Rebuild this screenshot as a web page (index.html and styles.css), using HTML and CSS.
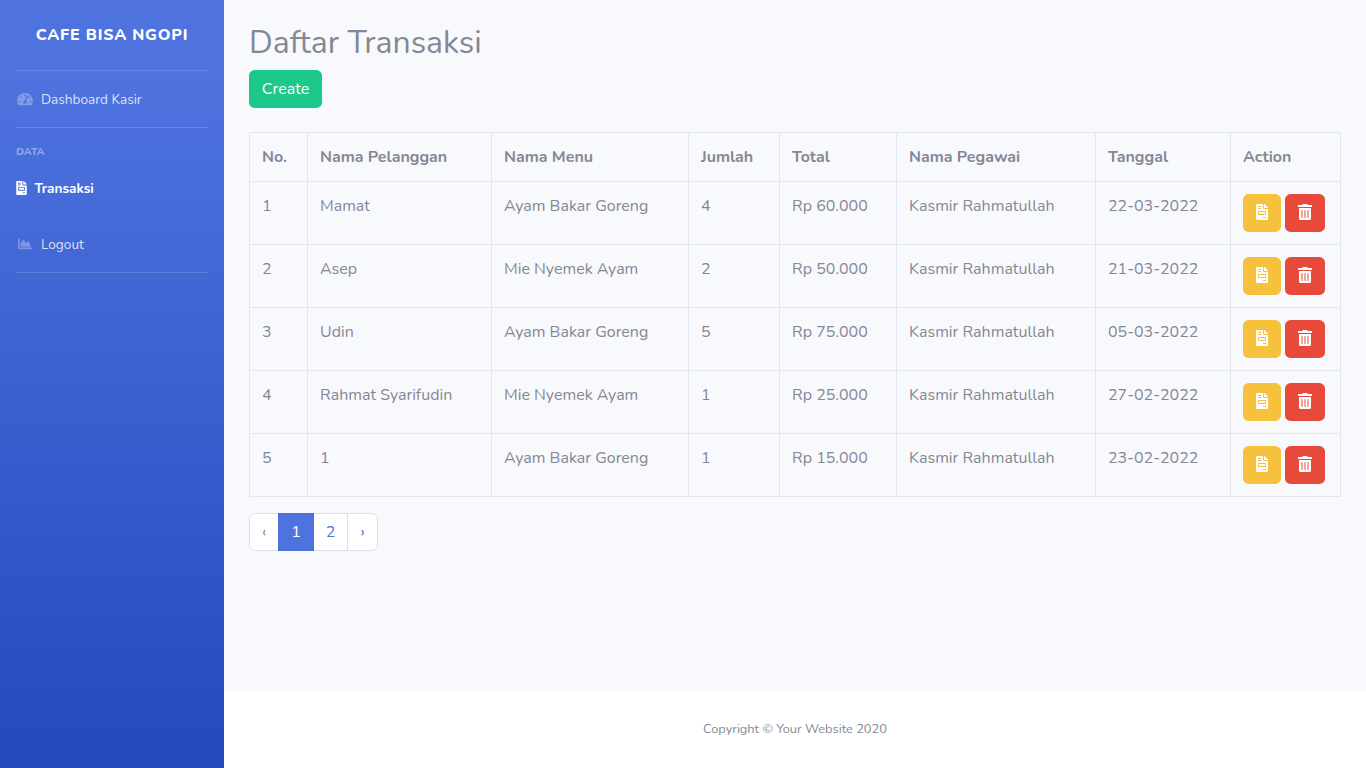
FILE: index.html
```html
<!DOCTYPE html>
<html lang="id">
<head>
<meta charset="utf-8">
<title>Daftar Transaksi</title>
<link rel="stylesheet" href="styles.css">
</head>
<body>
<svg class="sprite" aria-hidden="true">
  <symbol id="invoice" viewBox="0 0 384 512"><path d="M288 256H96v64h192v-64zm89-151L279.1 7c-4.5-4.5-10.6-7-17-7H256v128h128v-6.1c0-6.3-2.5-12.4-7-16.9zm-153 31V0H24C10.7 0 0 10.7 0 24v464c0 13.3 10.7 24 24 24h336c13.3 0 24-10.7 24-24V160H248c-13.2 0-24-10.8-24-24zM64 72c0-4.42 3.58-8 8-8h80c4.42 0 8 3.58 8 8v16c0 4.42-3.58 8-8 8H72c-4.42 0-8-3.58-8-8V72zm0 64c0-4.42 3.58-8 8-8h80c4.42 0 8 3.58 8 8v16c0 4.42-3.58 8-8 8H72c-4.42 0-8-3.58-8-8v-16zm256 304c0 4.42-3.58 8-8 8h-80c-4.42 0-8-3.58-8-8v-16c0-4.42 3.58-8 8-8h80c4.42 0 8 3.58 8 8v16zm0-200v96c0 8.84-7.16 16-16 16H80c-8.84 0-16-7.16-16-16v-96c0-8.84 7.16-16 16-16h224c8.84 0 16 7.16 16 16z"/></symbol>
  <symbol id="trash" viewBox="0 0 448 512"><path d="M32 464a48 48 0 0 0 48 48h288a48 48 0 0 0 48-48V128H32zm272-256a16 16 0 0 1 32 0v224a16 16 0 0 1-32 0zm-96 0a16 16 0 0 1 32 0v224a16 16 0 0 1-32 0zm-96 0a16 16 0 0 1 32 0v224a16 16 0 0 1-32 0zM432 32H312l-9.4-18.7A24 24 0 0 0 281.1 0H166.8a23.72 23.72 0 0 0-21.4 13.3L136 32H16A16 16 0 0 0 0 48v32a16 16 0 0 0 16 16h416a16 16 0 0 0 16-16V48a16 16 0 0 0-16-16z"/></symbol>
  <symbol id="chart" viewBox="0 0 512 512"><path d="M500 384c6.6 0 12 5.4 12 12v40c0 6.6-5.4 12-12 12H12c-6.6 0-12-5.4-12-12V76c0-6.6 5.4-12 12-12h40c6.6 0 12 5.4 12 12v308h436zM372.7 159.5L288 216l-85.3-113.7c-5.1-6.8-15.5-6.3-19.9 1L96 248v104h384l-89.9-187.8c-3.2-6.5-11.4-8.7-17.4-4.7z"/></symbol>
  <symbol id="gauge" viewBox="0 0 576 512"><path d="M288 32C128.94 32 0 160.94 0 320c0 52.8 14.25 102.26 39.06 144.8 5.61 9.62 16.3 15.2 27.44 15.2h443c11.14 0 21.83-5.58 27.44-15.2C561.75 422.26 576 372.8 576 320c0-159.06-128.94-288-288-288zm0 64c14.71 0 26.58 10.13 30.32 23.65-1.11 2.26-2.64 4.23-3.45 6.67l-9.22 27.67c-5.13 3.49-10.97 6.01-17.64 6.01-17.67 0-32-14.33-32-32S270.33 96 288 96zM96 384c-17.67 0-32-14.33-32-32s14.33-32 32-32 32 14.33 32 32-14.33 32-32 32zm48-160c-17.67 0-32-14.33-32-32s14.33-32 32-32 32 14.33 32 32-14.33 32-32 32zm246.77-72.41l-61.33 184C343.13 347.33 352 364.54 352 384c0 11.72-3.38 22.55-8.88 32H232.88c-5.5-9.45-8.88-20.28-8.88-32 0-33.94 26.5-61.43 59.9-63.59l61.34-184.01c4.17-12.56 17.73-19.45 30.36-15.17 12.57 4.19 19.35 17.79 15.17 30.36zm14.66 57.2l15.52-46.55c3.47-1.29 7.13-2.23 11.05-2.23 17.67 0 32 14.33 32 32s-14.33 32-32 32c-11.38-.01-20.89-6.28-26.57-15.22zM480 384c-17.67 0-32-14.33-32-32s14.33-32 32-32 32 14.33 32 32-14.33 32-32 32z"/></symbol>
</svg>
<div class="wrapper">
  <nav class="sidebar">
    <a class="brand"><span>CAFE BISA NGOPI</span></a>
    <hr class="divider">
    <a class="nav-link dash"><svg class="nav-icon gauge"><use href="#gauge"/></svg><span>Dashboard Kasir</span></a>
    <hr class="divider">
    <div class="heading"><span>DATA</span></div>
    <a class="nav-link active"><svg class="nav-icon invoice"><use href="#invoice"/></svg><span>Transaksi</span></a>
    <a class="nav-link logout"><svg class="nav-icon chart"><use href="#chart"/></svg><span>Logout</span></a>
    <hr class="divider">
  </nav>
  <div class="content">
    <main class="main">
      <h2 class="title">Daftar Transaksi</h2>
      <a class="btn create">Create</a>
      <table class="table">
        <colgroup><col class="c-no"><col class="c-customer"><col class="c-menu"><col class="c-qty"><col class="c-total"><col class="c-staff"><col class="c-date"><col class="c-action"></colgroup>
        <thead><tr><th>No.</th><th>Nama Pelanggan</th><th>Nama Menu</th><th>Jumlah</th><th>Total</th><th>Nama Pegawai</th><th>Tanggal</th><th>Action</th></tr></thead>
        <tbody>
          <tr><td>1</td><td>Mamat</td><td>Ayam Bakar Goreng</td><td>4</td><td>Rp 60.000</td><td>Kasmir Rahmatullah</td><td>22-03-2022</td><td><div class="actions"><a class="btn edit"><svg class="i-invoice"><use href="#invoice"/></svg></a><a class="btn delete"><svg class="i-trash"><use href="#trash"/></svg></a></div></td></tr>
          <tr><td>2</td><td>Asep</td><td>Mie Nyemek Ayam</td><td>2</td><td>Rp 50.000</td><td>Kasmir Rahmatullah</td><td>21-03-2022</td><td><div class="actions"><a class="btn edit"><svg class="i-invoice"><use href="#invoice"/></svg></a><a class="btn delete"><svg class="i-trash"><use href="#trash"/></svg></a></div></td></tr>
          <tr><td>3</td><td>Udin</td><td>Ayam Bakar Goreng</td><td>5</td><td>Rp 75.000</td><td>Kasmir Rahmatullah</td><td>05-03-2022</td><td><div class="actions"><a class="btn edit"><svg class="i-invoice"><use href="#invoice"/></svg></a><a class="btn delete"><svg class="i-trash"><use href="#trash"/></svg></a></div></td></tr>
          <tr><td>4</td><td>Rahmat Syarifudin</td><td>Mie Nyemek Ayam</td><td>1</td><td>Rp 25.000</td><td>Kasmir Rahmatullah</td><td>27-02-2022</td><td><div class="actions"><a class="btn edit"><svg class="i-invoice"><use href="#invoice"/></svg></a><a class="btn delete"><svg class="i-trash"><use href="#trash"/></svg></a></div></td></tr>
          <tr><td>5</td><td>1</td><td>Ayam Bakar Goreng</td><td>1</td><td>Rp 15.000</td><td>Kasmir Rahmatullah</td><td>23-02-2022</td><td><div class="actions"><a class="btn edit"><svg class="i-invoice"><use href="#invoice"/></svg></a><a class="btn delete"><svg class="i-trash"><use href="#trash"/></svg></a></div></td></tr>
        </tbody>
      </table>
      <div class="pagination"><span class="page prev">‹</span><span class="page current">1</span><a class="page second">2</a><a class="page next">›</a></div>
    </main>
    <footer class="footer"><span>Copyright © Your Website 2020</span></footer>
  </div>
</div>
</body>
</html>
```
FILE: styles.css
```css
* { box-sizing: border-box; }
body { margin: 0; font-family: Nunito, Lato, "Open Sans", sans-serif; font-size: 16px; line-height: 24px; color: #858796; background: #f8f9fc; }
.sprite { display: none; }
svg { display: block; fill: currentColor; flex: none; }
.wrapper { display: flex; height: 768px; }

.sidebar { width: 224px; flex: none; color: #fff; background: linear-gradient(180deg, #4e73df 10%, #224abe 100%); }
.brand { display: flex; align-items: center; justify-content: center; height: 70px; font-weight: 800; letter-spacing: .8px; }
.divider { height: 1px; margin: 0 16px; border: 0; background: rgba(255, 255, 255, .15); }
.nav-link { display: flex; align-items: center; padding: 2px 16px 0; font-size: 13.6px; line-height: 20px; color: rgba(255, 255, 255, .8); }
.dash { height: 56px; }
.nav-icon { height: 14px; margin-bottom: 2px; color: rgba(255, 255, 255, .3); }
.gauge { width: 16px; margin-right: 8.5px; margin-left: .5px; }
.chart { width: 14px; margin-right: 9.5px; margin-left: 1.5px; }
.invoice { width: 11px; margin-right: 7.4px; color: #fff; }
.heading { padding: 16px 16px 0; height: 32px; font-size: 10.4px; line-height: 16px; font-weight: 800; color: rgba(255, 255, 255, .4); }
.active { height: 56px; color: #fff; font-weight: 700; }
.logout { height: 56px; }

.content { flex: 1; display: flex; flex-direction: column; }
.main { flex: 1; padding: 23px 25px 0; }
.title { margin: 0 0 8px; font-size: 32px; line-height: 39px; font-weight: 400; }
.btn { display: flex; align-items: center; justify-content: center; height: 38px; border-radius: 5.6px; color: #fff; }
.create { width: 73px; background: #1cc88a; }
.table { width: 1092px; margin: 24px 0 16px; table-layout: fixed; border-collapse: collapse; }
.table th, .table td { height: 49px; padding: 12px; border: 1px solid #e3e6f0; text-align: left; vertical-align: top; white-space: nowrap; }
.table td { height: 63px; }
.table th { font-weight: 700; }
.c-no { width: 58px; }
.c-customer { width: 184px; }
.c-menu { width: 197px; }
.c-qty { width: 91px; }
.c-total { width: 117px; }
.c-staff { width: 199px; }
.c-date { width: 135px; }
.c-action { width: 110px; }
.actions { display: flex; gap: 4px; }
.actions .btn { padding-bottom: 2px; }
.edit { width: 38px; background: #f6c23e; }
.delete { width: 40px; background: #e74a3b; }
.i-invoice { width: 12px; height: 16px; }
.i-trash { width: 14px; height: 16px; }

.pagination { display: flex; width: 129px; height: 38px; border: 1px solid #dddfeb; border-radius: 5.6px; background: #fff; color: #4e73df; }
.page { display: flex; align-items: center; justify-content: center; height: 36px; }
.prev { width: 28px; color: #858796; }
.current { width: 36px; height: 38px; margin-top: -1px; background: #4e73df; color: #fff; }
.second { width: 34px; border-right: 1px solid #dddfeb; }
.next { flex: 1; }

.footer { display: flex; align-items: center; justify-content: center; height: 77px; background: #fff; font-size: 12.8px; line-height: 13px; }
```
